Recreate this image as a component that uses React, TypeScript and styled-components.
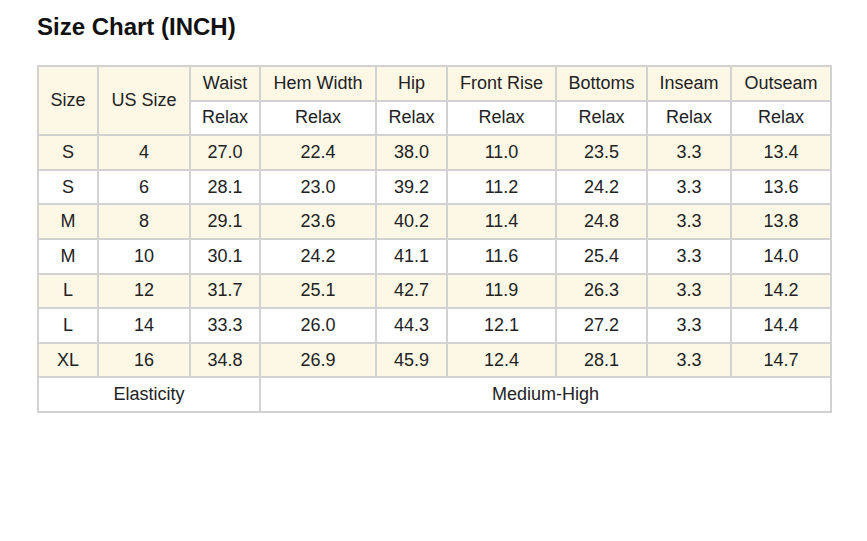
import React from "react";
import styled, { createGlobalStyle } from "styled-components";

const Global = createGlobalStyle`
  html, body { margin: 0; padding: 0; background: #ffffff; }
  body { font-family: "Liberation Sans", Arial, sans-serif; color: #222; }
`;

const Page = styled.div`
  padding: 12px 0 0 37px;
  width: 793px;
`;

const Title = styled.h1`
  margin: 0 0 23px 0;
  font-size: 24px;
  font-weight: bold;
  line-height: 30px;
  color: #111;
`;

const Table = styled.table`
  border-collapse: collapse;
  table-layout: fixed;
  width: 793px;
  font-size: 18px;
`;

const Cell = styled.td<{ $cream?: boolean }>`
  border: 2px solid #d2d2d2;
  height: 32.6px;
  padding: 0;
  text-align: center;
  vertical-align: middle;
  background: ${(p) => (p.$cream ? "#fdf8e6" : "#ffffff")};
  color: #222;
  font-weight: normal;
  white-space: nowrap;
`;

const cols = [60, 92, 70, 116, 71, 109, 91, 84, 100];
const measures = ["Waist", "Hem Width", "Hip", "Front Rise", "Bottoms", "Inseam", "Outseam"];
const rows: string[][] = [
  ["S", "4", "27.0", "22.4", "38.0", "11.0", "23.5", "3.3", "13.4"],
  ["S", "6", "28.1", "23.0", "39.2", "11.2", "24.2", "3.3", "13.6"],
  ["M", "8", "29.1", "23.6", "40.2", "11.4", "24.8", "3.3", "13.8"],
  ["M", "10", "30.1", "24.2", "41.1", "11.6", "25.4", "3.3", "14.0"],
  ["L", "12", "31.7", "25.1", "42.7", "11.9", "26.3", "3.3", "14.2"],
  ["L", "14", "33.3", "26.0", "44.3", "12.1", "27.2", "3.3", "14.4"],
  ["XL", "16", "34.8", "26.9", "45.9", "12.4", "28.1", "3.3", "14.7"],
];

export default function App() {
  return (
    <>
      <Global />
      <Page>
        <Title>Size Chart (INCH)</Title>
        <Table>
          <colgroup>
            {cols.map((w, i) => (
              <col key={i} style={{ width: w }} />
            ))}
          </colgroup>
          <thead>
            <tr>
              <Cell as="th" $cream rowSpan={2}>Size</Cell>
              <Cell as="th" $cream rowSpan={2}>US Size</Cell>
              {measures.map((m) => (
                <Cell as="th" $cream key={m}>{m}</Cell>
              ))}
            </tr>
            <tr>
              {measures.map((m) => (
                <Cell as="th" key={m}>Relax</Cell>
              ))}
            </tr>
          </thead>
          <tbody>
            {rows.map((r, i) => (
              <tr key={i}>
                {r.map((v, j) => (
                  <Cell key={j} $cream={i % 2 === 0}>{v}</Cell>
                ))}
              </tr>
            ))}
            <tr>
              <Cell colSpan={3}>Elasticity</Cell>
              <Cell colSpan={6}>Medium-High</Cell>
            </tr>
          </tbody>
        </Table>
      </Page>
    </>
  );
}
